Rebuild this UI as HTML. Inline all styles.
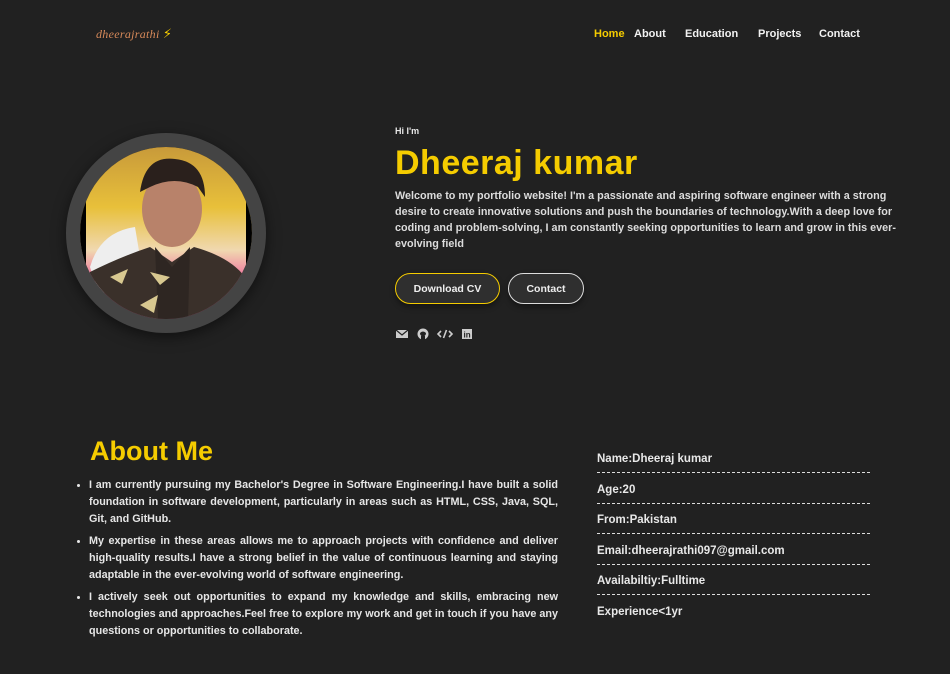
<!DOCTYPE html>
<html><head><meta charset="utf-8"><style>
*{margin:0;padding:0;box-sizing:border-box}
body{width:950px;height:674px;background:#212121;color:#e8e8e8;font-family:"Liberation Sans",sans-serif;font-weight:bold;position:relative;overflow:hidden}
.abs{position:absolute}
.logo{left:96px;top:27px;font-family:"Liberation Serif",serif;font-style:italic;font-weight:normal;color:#d88a5a;font-size:12px;letter-spacing:0.3px}
nav a{position:absolute;top:28px;font-size:11px;color:#f2f2f2;text-decoration:none}
.hi{left:395px;top:126px;font-size:9px}
h1{position:absolute;left:395px;top:144px;font-size:34px;color:#f5cc00;letter-spacing:0.5px}
.intro{left:395px;top:188px;width:505px;font-size:10.8px;line-height:16px;color:#dcdcdc}
.btn{position:absolute;top:273px;height:31px;border-radius:16px;background:#2f2f2f;font-size:10.5px;color:#eee;display:flex;align-items:center;justify-content:center;box-shadow:0 3px 6px rgba(0,0,0,.4)}
.circ{left:66px;top:133px;width:200px;height:200px;border-radius:50%;background:#444;box-shadow:0 4px 14px rgba(0,0,0,.5)}
.inner{position:absolute;left:14px;top:14px;width:172px;height:172px;border-radius:50%;background:#000;overflow:hidden}
h2{position:absolute;left:90px;top:436px;font-size:27px;color:#f5cc00}
ul{position:absolute;left:89px;top:477px;width:469px;font-size:10.8px;line-height:17px;text-align:justify;color:#e6e6e6}
li{margin-bottom:5px}
li::marker{font-size:9px}
.info{left:597px;top:452px;width:273px;font-size:11.5px}
.info div{line-height:14px;padding-bottom:6px;margin-bottom:9.5px;border-bottom:1px dashed #ddd}
.info div:last-child{border:none}
</style></head><body>
<div class="abs logo">dheerajrathi <span style="color:#f5cc00;font-style:normal;font-family:'DejaVu Sans';font-size:13px">⚡</span></div>
<nav><a style="left:594px;color:#f5cc00">Home</a><a style="left:634px">About</a><a style="left:685px">Education</a><a style="left:758px">Projects</a><a style="left:819px">Contact</a></nav>
<div class="abs circ"><div class="inner">
<svg width="172" height="172" viewBox="0 0 172 172">
<defs><linearGradient id="bg" x1="0" y1="0" x2="0" y2="1"><stop offset="0" stop-color="#c89a3a"/><stop offset="0.35" stop-color="#e8c03a"/><stop offset="0.6" stop-color="#f0d8b0"/><stop offset="0.75" stop-color="#ef7aa0"/><stop offset="1" stop-color="#e060a0"/></linearGradient></defs>
<rect x="0" y="0" width="172" height="172" fill="url(#bg)"/>
<rect x="0" y="0" width="6" height="172" fill="#000"/><rect x="166" y="0" width="6" height="172" fill="#000"/>
<path d="M10 120 Q20 85 55 80 L60 110 L20 150Z" fill="#eee"/>
<ellipse cx="92" cy="62" rx="30" ry="38" fill="#b8826a"/>
<path d="M60 45 Q65 8 95 12 Q125 15 125 50 L118 40 Q95 28 70 40Z" fill="#2a201c"/>
<path d="M0 172 L10 125 Q40 110 70 100 L92 115 L114 100 Q150 110 165 130 L172 172Z" fill="#3a302a"/>
<path d="M75 100 L92 120 L110 100 L108 172 L78 172Z" fill="#2e2622"/>
<path d="M30 130 l18 -8 l-6 15z M70 125 l20 5 l-10 8z M20 160 l15 -5 l-3 12z M60 158 l18 -10 l-4 18z" fill="#d8c890"/>
</svg></div></div>
<div class="abs hi">Hi I'm</div>
<h1>Dheeraj kumar</h1>
<div class="abs intro">Welcome to my portfolio website! I'm a passionate and aspiring software engineer with a strong desire to create innovative solutions and push the boundaries of technology.With a deep love for coding and problem-solving, I am constantly seeking opportunities to learn and grow in this ever-evolving field</div>
<div class="btn" style="left:395px;width:105px;border:1.5px solid #f5cc00">Download CV</div>
<div class="btn" style="left:508px;width:76px;border:1.5px solid #ddd">Contact</div>
<svg class="abs" style="left:395px;top:328px" width="80" height="12" viewBox="0 0 80 12">
<rect x="1" y="2" width="12" height="8" fill="#ccc"/><path d="M1 2 L7 7 L13 2" stroke="#212121" stroke-width="1.2" fill="none"/>
<circle cx="28" cy="6" r="5.5" fill="#ccc"/><path d="M26 12 L26 8 Q28 6 30 8 L30 12Z M25 5 Q28 2 31 5 Q31 8 28 8 Q25 8 25 5Z" fill="#212121"/>
<path d="M46 3 L43 6 L46 9 M54 3 L57 6 L54 9 M51.5 2 L48.5 10" stroke="#ccc" stroke-width="1.6" fill="none"/>
<rect x="67" y="1" width="10" height="10" fill="#ccc"/><text x="68.5" y="9.5" font-size="8" fill="#212121" font-family="Liberation Sans" font-weight="bold">in</text>
</svg>
<h2>About Me</h2>
<ul>
<li>I am currently pursuing my Bachelor's Degree in Software Engineering.I have built a solid foundation in software development, particularly in areas such as HTML, CSS, Java, SQL, Git, and GitHub.</li>
<li>My expertise in these areas allows me to approach projects with confidence and deliver high-quality results.I have a strong belief in the value of continuous learning and staying adaptable in the ever-evolving world of software engineering.</li>
<li>I actively seek out opportunities to expand my knowledge and skills, embracing new technologies and approaches.Feel free to explore my work and get in touch if you have any questions or opportunities to collaborate.</li>
</ul>
<div class="abs info"><div>Name:Dheeraj kumar</div><div>Age:20</div><div>From:Pakistan</div><div>Email:dheerajrathi097@gmail.com</div><div>Availabiltiy:Fulltime</div><div>Experience&lt;1yr</div></div>
</body></html>
